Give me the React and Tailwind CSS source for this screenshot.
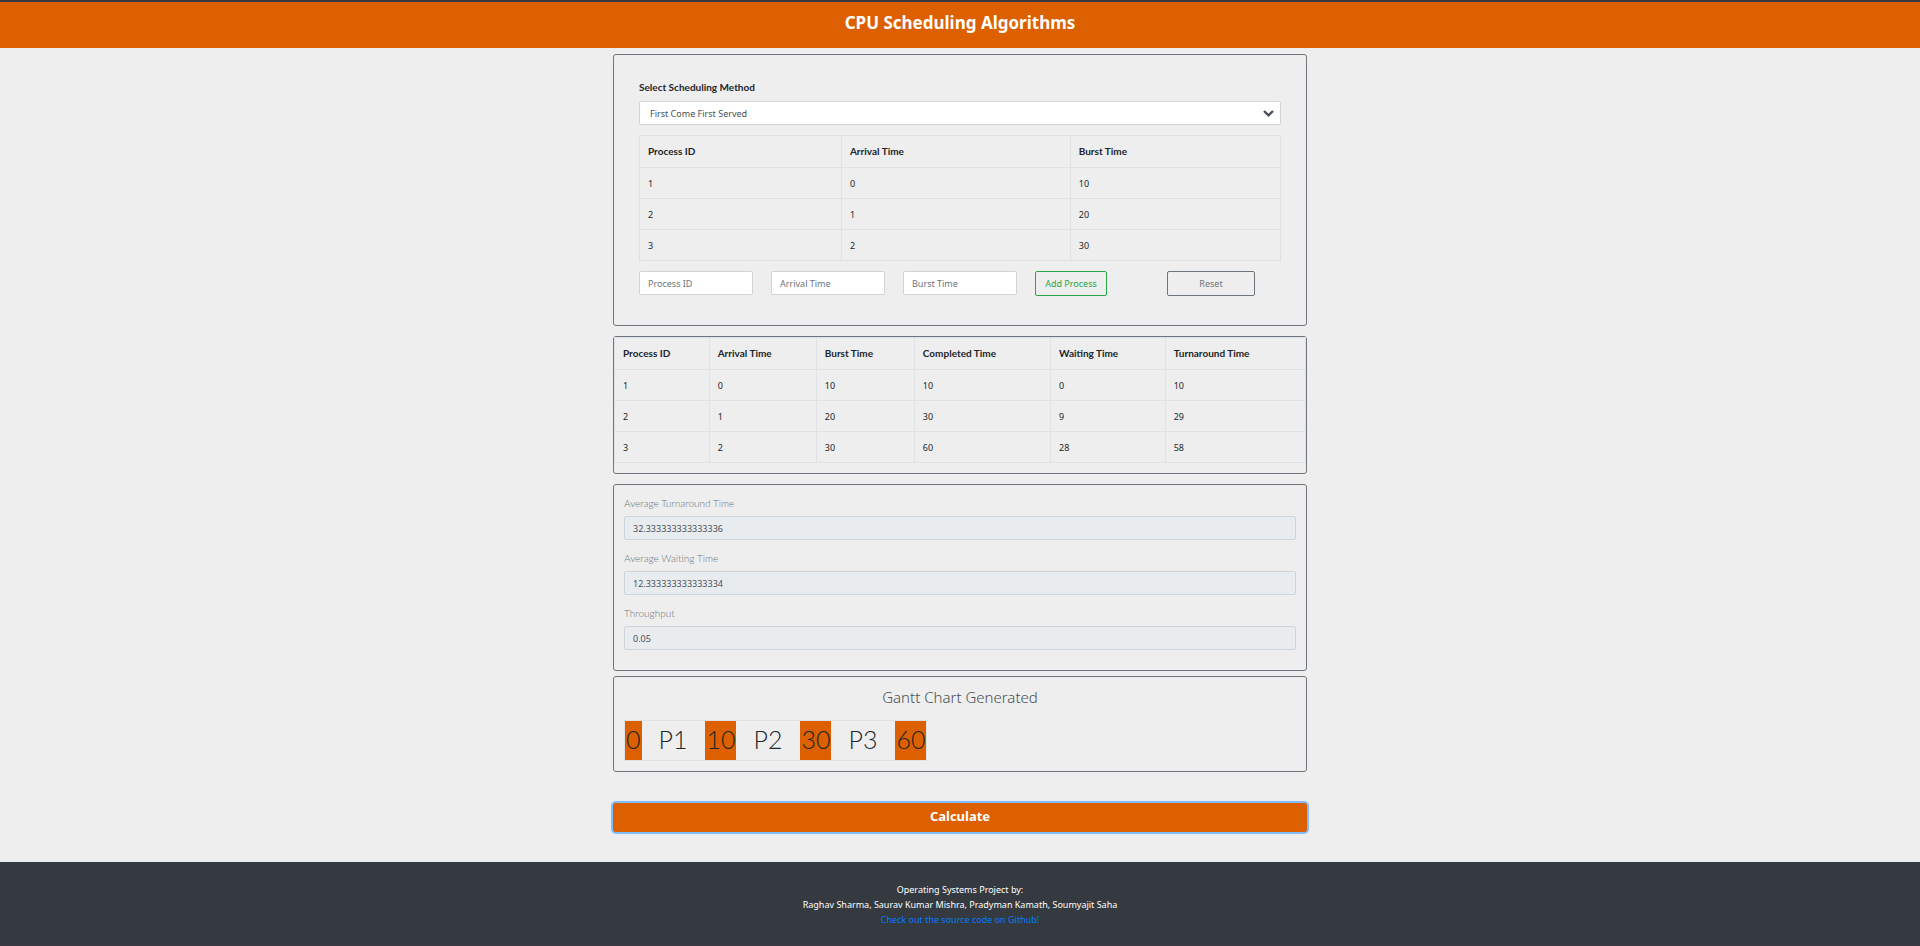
import React from 'react';

const processes = [
  { id: 1, arrival: 0, burst: 10, completed: 10, waiting: 0, turnaround: 10 },
  { id: 2, arrival: 1, burst: 20, completed: 30, waiting: 9, turnaround: 29 },
  { id: 3, arrival: 2, burst: 30, completed: 60, waiting: 28, turnaround: 58 },
];

const gantt = [
  { type: 'time', label: '0' },
  { type: 'process', label: 'P1' },
  { type: 'time', label: '10' },
  { type: 'process', label: 'P2' },
  { type: 'time', label: '30' },
  { type: 'process', label: 'P3' },
  { type: 'time', label: '60' },
];

const methods = [
  'First Come First Served',
  'Shortest Job First',
  'Shortest Remaining Time First',
  'Round Robin',
  'Priority Scheduling',
];

const inputClass =
  'block h-6 w-full min-w-0 rounded-[2px] border border-[#ced4da] bg-white px-2 pt-px text-[9px] text-[#495057] placeholder:text-[#6c757d]';

function Card({ className = '', children }) {
  return (
    <section className={`rounded-[3px] border border-[#6c757d] ${className}`}>{children}</section>
  );
}

function DataTable({ columns, widths, rows }) {
  return (
    <table className="w-full table-fixed border-collapse border border-[#dee2e6] text-left">
      <colgroup>
        {widths.map((width, i) => (
          <col key={i} className={width} />
        ))}
      </colgroup>
      <thead>
        <tr className="h-8">
          {columns.map(([key, title]) => (
            <th
              key={key}
              scope="col"
              className="border border-[#dee2e6] px-2 pb-[2px] font-[Lato,sans-serif] text-[10px] leading-4 font-bold"
            >
              {title}
            </th>
          ))}
        </tr>
      </thead>
      <tbody>
        {rows.map((row) => (
          <tr key={row.id} className="h-[31px]">
            {columns.map(([key]) => (
              <td key={key} className="border border-[#dee2e6] px-2 pt-[2px] text-[9px] leading-4">
                {row[key]}
              </td>
            ))}
          </tr>
        ))}
      </tbody>
    </table>
  );
}

function ResultField({ id, label, value }) {
  return (
    <div>
      <label
        htmlFor={id}
        className="block font-[Lato,sans-serif] text-[10px] leading-4 font-light text-[#6c757d]"
      >
        {label}
      </label>
      <input
        id={id}
        readOnly
        value={value}
        className="mt-[5px] block h-6 w-full rounded-[2px] border border-[#ced4da] bg-[#e9ecef] px-2 pt-px text-[9px] text-[#495057]"
      />
    </div>
  );
}

export default function App() {
  return (
    <div className="flex min-h-screen flex-col bg-[#eeeeee] font-['Noto_Sans',sans-serif] text-[#212529]">
      <header className="border-t-2 border-[#373a40] bg-[#dc5f00] pt-[9px] pb-[13px] text-center">
        <h1 className="text-[17px] leading-6 font-bold text-white">CPU Scheduling Algorithms</h1>
      </header>

      <main className="mx-auto w-full max-w-[694px] pt-[6px]">
        <Card className="px-[25px] pt-6 pb-[29px]">
          <label
            htmlFor="method"
            className="block font-[Lato,sans-serif] text-[10px] leading-4 font-bold"
          >
            Select Scheduling Method
          </label>
          <div className="relative mt-[6px]">
            <select
              id="method"
              className="block h-6 w-full appearance-none rounded-[2px] border border-[#ced4da] bg-white pt-[2px] pr-6 pl-[10px] text-[9px] text-[#495057]"
            >
              {methods.map((m) => (
                <option key={m}>{m}</option>
              ))}
            </select>
            <svg
              className="pointer-events-none absolute top-[9px] right-[7px] h-[7px] w-[11px]"
              viewBox="0 0 11 7"
              fill="none"
              stroke="#495057"
              strokeWidth="2.4"
              aria-hidden="true"
            >
              <path d="M1 1l4.500 4.300L10 1" />
            </svg>
          </div>
          <div className="mt-[10px]">
            <DataTable
              columns={[
                ['id', 'Process ID'],
                ['arrival', 'Arrival Time'],
                ['burst', 'Burst Time'],
              ]}
              widths={['w-[31.5%]', 'w-[35.7%]', 'w-[32.8%]']}
              rows={processes}
            />
          </div>
          <form className="mt-[10px] grid grid-cols-5 gap-[18px]" onSubmit={(e) => e.preventDefault()}>
            <input aria-label="Process ID" placeholder="Process ID" className={inputClass} />
            <input aria-label="Arrival Time" placeholder="Arrival Time" className={inputClass} />
            <input aria-label="Burst Time" placeholder="Burst Time" className={inputClass} />
            <button
              type="submit"
              className="h-[25px] w-[72px] rounded-[2px] border border-[#28a745] text-[9px] whitespace-nowrap text-[#28a745]"
            >
              Add Process
            </button>
            <button
              type="reset"
              className="h-[25px] w-[88px] rounded-[2px] border border-[#6c757d] text-[9px] text-[#6c757d]"
            >
              Reset
            </button>
          </form>
        </Card>

        <Card className="mt-[10px] pb-[10px]">
          <DataTable
            columns={[
              ['id', 'Process ID'],
              ['arrival', 'Arrival Time'],
              ['burst', 'Burst Time'],
              ['completed', 'Completed Time'],
              ['waiting', 'Waiting Time'],
              ['turnaround', 'Turnaround Time'],
            ]}
            widths={['w-[13.7%]', 'w-[15.5%]', 'w-[14.2%]', 'w-[19.7%]', 'w-[16.6%]', 'w-[20.3%]']}
            rows={processes}
          />
        </Card>

        <Card className="mt-[10px] flex flex-col gap-[10px] px-[10px] pt-[10px] pb-5">
          <ResultField id="avg-turnaround" label="Average Turnaround Time" value="32.333333333333336" />
          <ResultField id="avg-waiting" label="Average Waiting Time" value="12.333333333333334" />
          <ResultField id="throughput" label="Throughput" value="0.05" />
        </Card>

        <Card className="mt-[5px] px-[10px] pt-2 pb-[10px]">
          <h2 className="text-center text-[15px] leading-6 font-light text-[#495057]">
            Gantt Chart Generated
          </h2>
          <table className="mt-[11px] border-collapse border border-[#dee2e6] font-[Lato,sans-serif] text-[25px] leading-[37px] font-light">
            <tbody>
              <tr>
                {gantt.map(({ type, label }) => (
                  <td
                    key={label}
                    className={
                      type === 'time' ? 'bg-[#dc5f00] px-px pb-[2px]' : 'pr-[18px] pb-[2px] pl-[17px]'
                    }
                  >
                    {label}
                  </td>
                ))}
              </tr>
            </tbody>
          </table>
        </Card>

        <button
          type="button"
          className="mt-[31px] mb-[30px] block h-[29px] w-full rounded-[3px] bg-[#dc5f00] pb-[2px] text-[13px] font-bold text-white ring-2 ring-[#80bdff]"
        >
          Calculate
        </button>
      </main>

      <footer className="grow border-b-2 border-[#373a40] bg-[#343a40] pt-5 pb-[18px] text-center text-[9px] leading-[15px] text-white">
        <p>Operating Systems Project by:</p>
        <p>Raghav Sharma, Saurav Kumar Mishra, Pradyman Kamath, Soumyajit Saha</p>
        <a href="#source" className="text-[#007bff]">
          Check out the source code on Github!
        </a>
      </footer>
    </div>
  );
}
